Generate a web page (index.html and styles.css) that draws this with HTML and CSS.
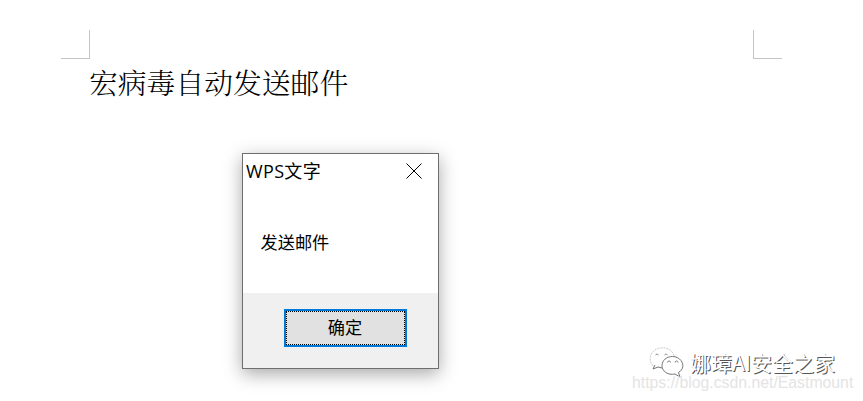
FILE: index.html
```html
<!DOCTYPE html>
<html lang="zh-CN">
<head>
<meta charset="utf-8">
<title>WPS文字</title>
<link rel="stylesheet" href="styles.css">
</head>
<body>
<main class="page">
  <div class="margins"><i class="corner left"></i><i class="corner right"></i></div>
  <h1 class="heading">宏病毒自动发送邮件</h1>
  <section class="dialog">
    <header class="titlebar">
      <span class="title">WPS文字</span>
      <svg class="close" width="16" height="16" viewBox="0 0 16 16"><path d="M.5.5l15 15M15.5.5l-15 15" stroke="#000" fill="none"/></svg>
    </header>
    <p class="message">发送邮件</p>
    <footer class="actions"><button class="ok"><span class="focus">确定</span></button></footer>
  </section>
</main>
<div class="watermark">
  <div class="account">
    <svg class="wechat" width="36" height="32" viewBox="0 0 36 32" fill="#fff">
      <path d="M6 22C-2 16 0 3 12 2c7-1 12 3 13 8" stroke="#bbb" stroke-width=".8" stroke-dasharray="2 1"/>
      <path d="M6 19l-2 4 5-2 4 1" stroke="#666" stroke-width=".9"/>
      <path d="M23.500 10.500c-6 0-10.500 4-10.500 9 0 6 6 10 13 8.500l5 3-1.500-4.500c5-3 5.500-8 2.500-12-2-2.500-5-4-8.500-4z" stroke="#666" stroke-width=".9"/>
      <path d="M6.500 9a1.800 1.800 0 0 1 3 0M15.500 9a1.800 1.800 0 0 1 3 0M18.500 16.500a1.500 1.500 0 0 1 3 0M26 16.500a1.500 1.500 0 0 1 3 0" stroke="#777" stroke-width=".9"/>
    </svg>
    <span class="name">娜璋AI安全之家</span>
  </div>
  <div class="url">https://blog.csdn.net/Eastmount</div>
</div>
</body>
</html>
```
FILE: styles.css
```css
* { box-sizing: border-box; }
body { margin: 0; background: #fff; color: #000; font-family: "Noto Sans CJK SC", sans-serif; }
.page { width: 863px; height: 401px; padding: 30px 81px 0 61px; overflow: hidden; }
.margins { display: flex; justify-content: space-between; height: 29px; }
.corner { width: 29px; height: 29px; border-bottom: 1px solid #c4c4c4; }
.left { border-right: 1px solid #c4c4c4; }
.right { border-left: 1px solid #c4c4c4; }
.heading { margin: 3px 0 0 28px; height: 40px; line-height: 40px; font-size: 28.800px; font-weight: 300; font-family: "Noto Serif CJK SC", "Noto Sans CJK SC", serif; white-space: nowrap; }
.dialog { display: flex; flex-direction: column; width: 197px; height: 216px; margin: 51px 0 0 181px; border: 1px solid #6e6e6e; background: #fff; box-shadow: 0 5px 17px rgba(0, 0, 0, .34); }
.titlebar { display: flex; justify-content: space-between; align-items: center; height: 34px; padding: 0 16px 0 3px; }
.title { font: 18px/32px "Open Sans", "Noto Sans CJK SC", sans-serif; letter-spacing: .35px; margin-top: -1px; }
.message { flex: 1; margin: 0; padding: 41px 0 0 17.500px; font-size: 17.200px; line-height: 25px; }
.actions { height: 75px; padding: 16px 0 0 41px; background: #f0f0f0; }
.ok { display: block; width: 123px; height: 38px; padding: 0; border: 2px solid #0078d7; background: #e1e1e1; font: 17.200px/30px "Noto Sans CJK SC", sans-serif; color: #000; }
.focus { display: block; height: 34px; padding-right: 1px; border: 1px dotted #000; }
.watermark { position: absolute; left: 632px; top: 346px; width: 231px; height: 55px; }
.account { display: flex; align-items: center; height: 32px; padding-left: 17px; }
.name { margin-left: 5px; font-size: 21px; line-height: 28px; color: #fff; text-shadow: 1px 1px 0 #555; white-space: nowrap; }
.url { margin-top: -4px; font: 15.800px/18px "Liberation Sans", sans-serif; color: #e4e4e4; white-space: nowrap; }
```
